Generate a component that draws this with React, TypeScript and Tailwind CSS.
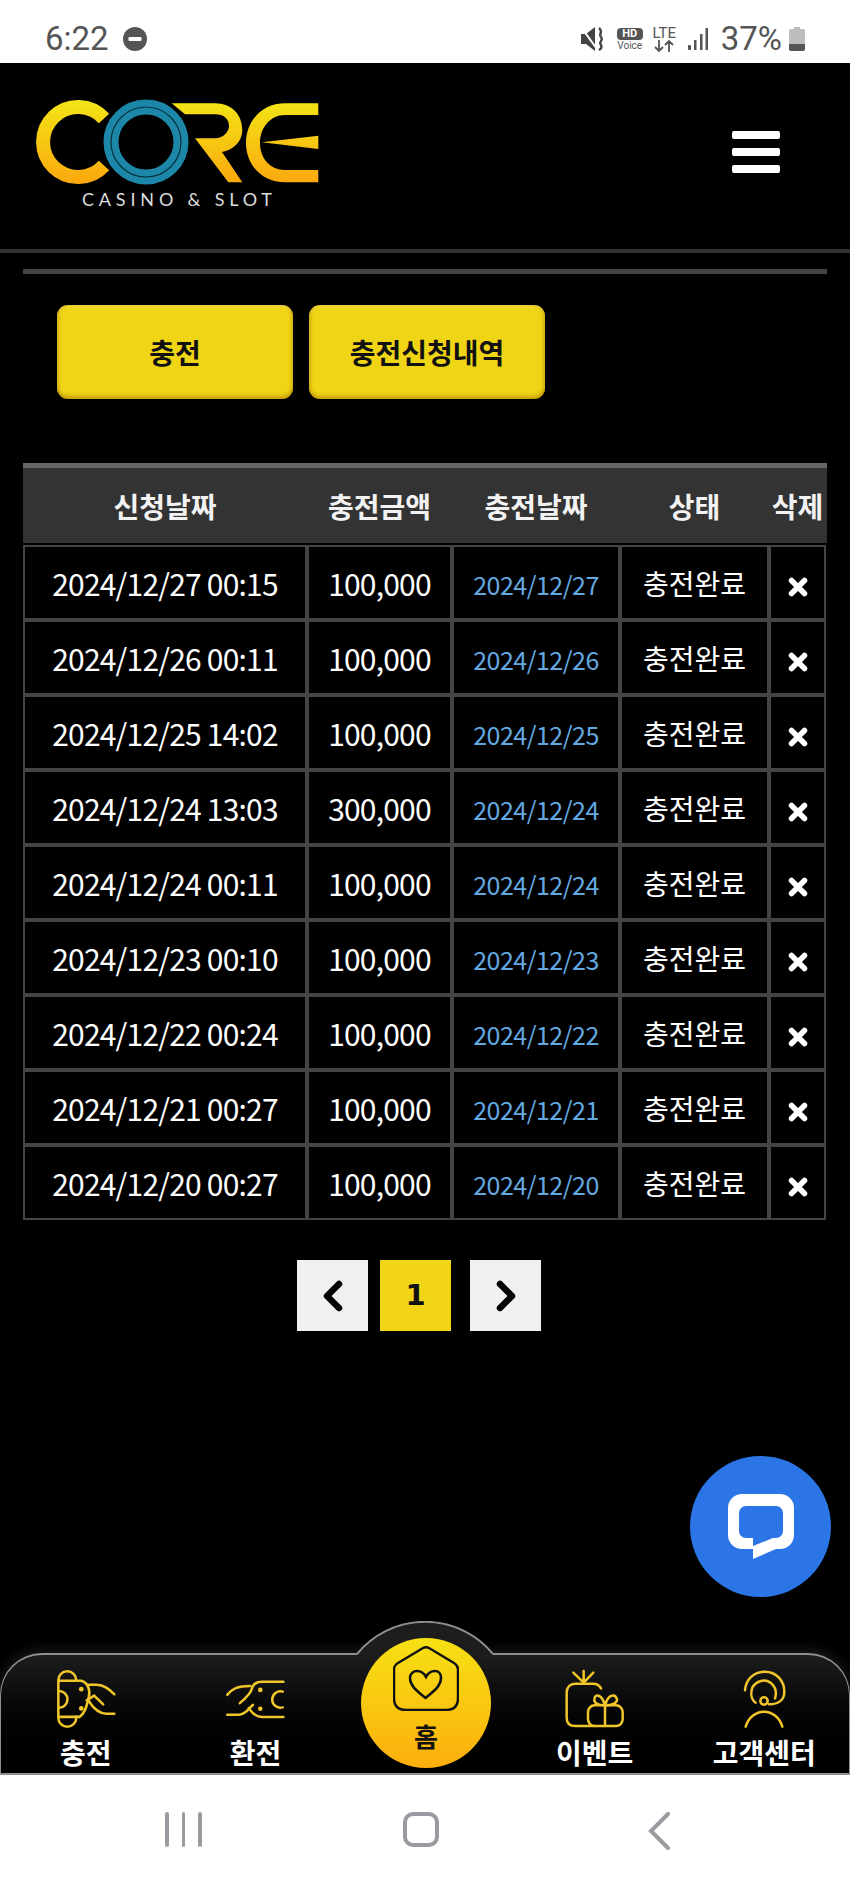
import React from "react";

const rows = [
  ["2024/12/27 00:15", "100,000", "2024/12/27"],
  ["2024/12/26 00:11", "100,000", "2024/12/26"],
  ["2024/12/25 14:02", "100,000", "2024/12/25"],
  ["2024/12/24 13:03", "300,000", "2024/12/24"],
  ["2024/12/24 00:11", "100,000", "2024/12/24"],
  ["2024/12/23 00:10", "100,000", "2024/12/23"],
  ["2024/12/22 00:24", "100,000", "2024/12/22"],
  ["2024/12/21 00:27", "100,000", "2024/12/21"],
  ["2024/12/20 00:27", "100,000", "2024/12/20"],
];

const gridCols = "grid grid-cols-[284px_145px_168px_149px_57px]";

function StatusBar() {
  return (
    <div className="flex h-[63px] items-start justify-between bg-white px-[45px] pt-[22px] font-['Roboto',sans-serif] text-[#555]">
      <div className="flex items-center gap-[14px]">
        <span className="text-[33px] leading-[34px]">6:22</span>
        <svg width="24" height="24" viewBox="0 0 24 24">
          <circle cx="12" cy="12" r="12" fill="#555" />
          <rect x="5.5" y="10" width="13" height="4" rx="1" fill="#fff" />
        </svg>
      </div>
      <div className="flex items-center">
        <svg width="24" height="24" viewBox="0 0 24 24" className="mr-[12px]" fill="none">
          <path d="M0 7H5L14 0V24L5 17H0Z" fill="#444" />
          <path d="M0 0L16 22" stroke="#fff" strokeWidth="2" />
          <path d="M18 1C23 5 17 7 20 10C23 13 17 15 20 18C21 20 20 22 18 23" stroke="#444" strokeWidth="2.4" />
        </svg>
        <div className="mr-[9px] flex w-[26px] flex-col items-center">
          <span className="flex h-[12px] w-[26px] items-center justify-center rounded-[4px] bg-[#555] text-[11px] font-bold leading-none text-white">HD</span>
          <span className="mt-[1px] text-[10px] leading-[10px]">Voice</span>
        </div>
        <div className="mr-[11px] flex w-[25px] flex-col items-center">
          <span className="text-[15px] leading-[14px]">LTE</span>
          <svg width="22" height="12" viewBox="0 0 22 12" fill="none" stroke="#555" strokeWidth="1.8">
            <path d="M6 0V11M2 7L6 11L10 7M16 12V1M12 5L16 1L20 5" />
          </svg>
        </div>
        <svg width="20" height="22" viewBox="0 0 20 22" className="mr-[13px]" fill="#555">
          <rect x="0" y="17" width="3" height="5" rx="1" />
          <rect x="6" y="12" width="2.5" height="10" />
          <rect x="12" y="6" width="2.5" height="16" />
          <rect x="17.5" y="0" width="2.5" height="22" />
        </svg>
        <span className="mr-[7px] text-[33px] leading-[34px]">37%</span>
        <svg width="16" height="24" viewBox="0 0 16 24">
          <path d="M5 0H11V2H14Q16 2 16 4V22Q16 24 14 24H2Q0 24 0 22V4Q0 2 2 2H5Z" fill="#bdbdbd" />
          <path d="M0 17H16V22Q16 24 14 24H2Q0 24 0 22Z" fill="#555" />
        </svg>
      </div>
    </div>
  );
}

function Logo() {
  return (
    <svg width="340" height="186" viewBox="0 -17 340 186" fill="none">
      <defs>
        <linearGradient id="coreGold" gradientUnits="userSpaceOnUse" x1="0" y1="20" x2="0" y2="104">
          <stop offset="0" stopColor="#f3e516" />
          <stop offset="1" stopColor="#fba80e" />
        </linearGradient>
      </defs>
      <path d="M104 38.5A35 35 0 1 0 104 85.5" stroke="url(#coreGold)" strokeWidth="14" />
      <path
        fill="url(#coreGold)"
        d="M171.7 23.3H215C232 23.3 242.3 35 242.3 50C242.3 62 233 70 222 72L242.3 102.3H228.3L195 58.3H215C224 58.3 229 51 229 46C229 39 224 34.3 215 34.3H185Z"
      />
      <path
        fill="url(#coreGold)"
        d="M318.3 23.3H285C262 23.3 246 41 246 63C246 85 262 102.3 285 102.3H318.3V90H285C270 90 260 78 260 63C260 48 270 35 285 35H318.3Z"
      />
      <path d="M261.7 62.3L318.3 55.7V69Z" fill="url(#coreGold)" />
      <circle cx="146" cy="62" r="35" stroke="#1c87a8" strokeWidth="15" />
      <circle cx="146" cy="62" r="35" stroke="#06303d" strokeWidth="1.2" />
      <text x="82" y="126" fill="#dcdcdc" fontSize="18" textLength="190" fontFamily="Lato, sans-serif">CASINO &amp; SLOT</text>
    </svg>
  );
}

function Header() {
  return (
    <header className="flex h-[186px] items-start justify-between pr-[70px]">
      <Logo />
      <div className="mt-[68px] flex w-[48px] flex-col gap-[9px]">
        <div className="h-[8px] rounded-[2px] bg-white" />
        <div className="h-[8px] rounded-[2px] bg-white" />
        <div className="h-[8px] rounded-[2px] bg-white" />
      </div>
    </header>
  );
}

function ActionButton({ label }: { label: string }) {
  return (
    <button className="flex h-[94px] w-[236px] items-center justify-center rounded-[11px] bg-[#f0d516] text-[28px] font-bold text-[#111] shadow-[inset_0_-3px_4px_rgba(170,125,0,0.55),inset_0_2px_3px_rgba(255,255,255,0.2),inset_2px_0_3px_rgba(170,125,0,0.25),inset_-2px_0_3px_rgba(170,125,0,0.25)]">
      {label}
    </button>
  );
}

function HistoryTable() {
  const heads = ["신청날짜", "충전금액", "충전날짜", "상태", "삭제"];
  return (
    <div className="mx-[23px] mt-[64px]">
      <div className={`${gridCols} h-[80px] border-t-[5px] border-[#666] bg-[#333]`}>
        {heads.map((h) => (
          <div key={h} className="flex items-center justify-center text-[28px] font-bold text-[#f2f2f2]">
            {h}
          </div>
        ))}
      </div>
      <div className={`${gridCols} mt-[2px]`}>
        {rows.map((r, i) => (
          <React.Fragment key={i}>
            <div className="flex h-[75px] items-center justify-center border-2 border-[#444] pt-[1px] text-[30px] tracking-[-0.8px] text-white">{r[0]}</div>
            <div className="flex h-[75px] items-center justify-center border-2 border-[#444] pt-[1px] text-[30px] tracking-[-0.8px] text-white">{r[1]}</div>
            <div className="flex h-[75px] items-center justify-center border-2 border-[#444] pt-[4px] text-[25px] tracking-[-0.5px] text-[#63a9e0]">{r[2]}</div>
            <div className="flex h-[75px] items-center justify-center border-2 border-[#444] pt-[1px] text-[28px] text-white">충전완료</div>
            <div className="flex h-[75px] items-center justify-center border-2 border-[#444] pt-[8px]">
              <svg width="20" height="20" viewBox="0 0 20 20">
                <path d="M3.5 3.5L16.5 16.5M16.5 3.5L3.5 16.5" stroke="#fff" strokeWidth="5.5" strokeLinecap="round" />
              </svg>
            </div>
          </React.Fragment>
        ))}
      </div>
    </div>
  );
}

function Pagination() {
  return (
    <div className="ml-[297px] mt-[40px] flex">
      <div className="flex h-[71px] w-[71px] items-center justify-center bg-[#f0eff2]">
        <svg width="24" height="34" viewBox="0 0 24 34" fill="none">
          <path d="M18 5L6 17L18 29" stroke="#000" strokeWidth="6.5" strokeLinejoin="round" strokeLinecap="round" />
        </svg>
      </div>
      <div className="ml-[12px] flex h-[71px] w-[71px] items-center justify-center bg-[#f1d516] font-['DejaVu_Sans',sans-serif] text-[29px] font-bold text-[#111]">
        1
      </div>
      <div className="ml-[19px] flex h-[71px] w-[71px] items-center justify-center bg-[#f0eff2]">
        <svg width="24" height="34" viewBox="0 0 24 34" fill="none">
          <path d="M6 5L18 17L6 29" stroke="#000" strokeWidth="6.5" strokeLinejoin="round" strokeLinecap="round" />
        </svg>
      </div>
    </div>
  );
}

function ChatButton() {
  return (
    <div className="absolute left-[690px] top-[1456px] flex h-[141px] w-[141px] items-center justify-center rounded-full bg-[#2b75e6]">
      <svg width="66" height="65" viewBox="727 1497 66 65">
        <path
          fillRule="evenodd"
          fill="#fff"
          d="M741 1497H779A14 14 0 0 1 793 1511V1538A14 14 0 0 1 779 1552H775L752 1562V1552H741A14 14 0 0 1 727 1538V1511A14 14 0 0 1 741 1497ZM745 1509A7 7 0 0 0 738 1516V1534A7 7 0 0 0 745 1541H752V1549L772 1541H775A7 7 0 0 0 782 1534V1516A7 7 0 0 0 775 1509Z"
        />
      </svg>
    </div>
  );
}

const goldLine = "#f0c62a";

function TopUpIcon() {
  return (
    <svg width="58" height="58" viewBox="78 58 172 172" fill="none" stroke={goldLine} strokeWidth="7.5" strokeLinecap="round" className="overflow-visible">
      <path d="M82 197V90H135V88A26 26 0 0 0 82 88" />
      <path d="M82 197H135V200A26 26 0 0 1 82 200" />
      <path d="M84 120A25 25 0 0 1 84 170" />
      <path d="M135 90H150C170 95 178 120 172 140C166 160 165 182 145 197H135" />
      <path d="M170 102H195C220 102 235 118 248 130" />
      <path d="M172 150C185 170 200 188 225 188H248" />
      <path d="M166 148L188 134L215 160" />
      <circle cx="150" cy="115" r="7" fill={goldLine} stroke="none" />
      <circle cx="150" cy="172" r="7" fill={goldLine} stroke="none" />
    </svg>
  );
}

function ExchangeIcon() {
  return (
    <svg width="57" height="38" viewBox="590 85 171 115" fill="none" stroke={goldLine} strokeWidth="7.5" strokeLinecap="round" className="overflow-visible">
      <path d="M760 90H695C675 90 668 100 665 110C662 124 652 135 628 155" />
      <path d="M590 130C605 112 620 103 660 103" />
      <path d="M590 190H625C645 190 655 172 668 160" />
      <path d="M760 197H695C680 197 665 185 655 170" />
      <path d="M758 120A25 25 0 1 0 758 168" />
      <circle cx="690" cy="115" r="7" fill={goldLine} stroke="none" />
      <circle cx="690" cy="172" r="7" fill={goldLine} stroke="none" />
    </svg>
  );
}

function GiftIcon() {
  return (
    <svg width="57" height="56" viewBox="50 30 171 168" fill="none" stroke={goldLine} strokeWidth="7.5" strokeLinecap="round" className="overflow-visible">
      <path d="M103 65L72 35M103 65V30M103 65L132 35" />
      <path d="M155 82C150 72 140 68 130 68H78C62 68 52 78 52 95V170C52 187 62 195 78 195H135" />
      <rect x="116" y="133" width="104" height="62" rx="20" />
      <path d="M167 133V195" />
      <path d="M167 133C145 133 133 125 135 114C137 98 157 98 167 133C177 98 197 98 203 114C205 125 189 133 167 133Z" />
    </svg>
  );
}

function SupportIcon() {
  return (
    <svg width="41" height="56" viewBox="585 30 123 168" fill="none" stroke={goldLine} strokeWidth="7.5" strokeLinecap="round" className="overflow-visible">
      <path d="M588 88C590 55 615 32 648 32C682 32 706 60 706 92C706 115 690 130 660 130" />
      <path d="M620 125C605 115 605 95 610 80C620 60 650 50 668 68C685 85 682 100 678 112" />
      <circle cx="645" cy="120" r="11" />
      <path d="M590 197C598 170 620 152 645 152C670 152 692 170 700 197" />
    </svg>
  );
}

function NavItem({ label, children }: { label: string; children?: React.ReactNode }) {
  return (
    <div className="flex h-[120px] flex-col items-center">
      <div className="mt-[15px] flex h-[58px] items-center justify-center">{children}</div>
      <span className="mt-[4px] text-[28px] font-bold leading-[40px] text-white">{label}</span>
    </div>
  );
}

function HomeBadge() {
  return (
    <div className="absolute left-[360px] top-[-17px] flex h-[130px] w-[130px] flex-col items-center rounded-full bg-gradient-to-b from-[#f6e114] to-[#fbae0c]">
      <svg width="66" height="65" viewBox="0 0 66 65" fill="none" stroke="#111" strokeWidth="2.5" className="mt-[8px]">
        <path d="M30 2Q33 0.5 36 2L61 17Q65 19.5 65 23V52Q65 64 53 64H13Q1 64 1 52V23Q1 19.5 5 17Z" />
        <path d="M32.5 52C24 45 17 40 17 32C17 27.5 20.5 25 24 25C27.5 25 31 27 33 31C35 27 38.5 25 42 25C45.5 25 48 27.5 48 32C48 40 41 45 32.5 52Z" />
      </svg>
      <span className="mt-[8px] text-[26px] font-bold leading-[34px] text-[#111]">홈</span>
    </div>
  );
}

function BottomBar() {
  return (
    <div className="relative h-[122px] rounded-t-[42px] border border-b-2 border-t-2 border-[#8f8f8f] bg-gradient-to-b from-[#1d1d1d] to-[#000] shadow-[0_-2px_14px_rgba(255,255,255,0.12)]">
      <svg width="138" height="35" viewBox="0 0 138 35" className="absolute left-[355px] top-[-34px]">
        <path d="M1 33A88 88 0 0 1 137 33L137 35H1Z" fill="#1d1d1d" />
        <path d="M1 33A88 88 0 0 1 137 33" fill="none" stroke="#8f8f8f" strokeWidth="2" />
      </svg>
      <HomeBadge />
      <div className="grid grid-cols-5">
        <NavItem label="충전"><TopUpIcon /></NavItem>
        <NavItem label="환전"><ExchangeIcon /></NavItem>
        <div />
        <NavItem label="이벤트"><GiftIcon /></NavItem>
        <NavItem label="고객센터"><SupportIcon /></NavItem>
      </div>
    </div>
  );
}

function SystemNav() {
  return (
    <div className="flex h-[114px] items-start bg-white pt-[37px]">
      <div className="ml-[165px] flex gap-[13px]">
        <div className="h-[35px] w-[3.5px] rounded-full bg-[#9a9aa0]" />
        <div className="h-[35px] w-[3.5px] rounded-full bg-[#9a9aa0]" />
        <div className="h-[35px] w-[3.5px] rounded-full bg-[#9a9aa0]" />
      </div>
      <div className="ml-[201px] h-[35px] w-[36px] rounded-[10px] border-[4px] border-[#9a9aa0]" />
      <svg width="22" height="38" viewBox="0 0 22 38" fill="none" className="ml-[209px]">
        <path d="M20 2L3 19L20 36" stroke="#9a9aa0" strokeWidth="4" strokeLinecap="round" />
      </svg>
    </div>
  );
}

export default function App() {
  return (
    <div className="relative flex h-[1889px] w-[850px] flex-col overflow-hidden bg-black font-['Noto_Sans_CJK_KR','Noto_Sans',sans-serif]">
      <StatusBar />
      <Header />
      <div className="h-[4px] bg-[#333]" />
      <main className="flex-1">
        <div className="mx-[23px] mt-[16px] h-[5px] bg-[#444]" />
        <div className="ml-[57px] mt-[31px] flex gap-[16px]">
          <ActionButton label="충전" />
          <ActionButton label="충전신청내역" />
        </div>
        <HistoryTable />
        <Pagination />
      </main>
      <BottomBar />
      <SystemNav />
      <ChatButton />
    </div>
  );
}
